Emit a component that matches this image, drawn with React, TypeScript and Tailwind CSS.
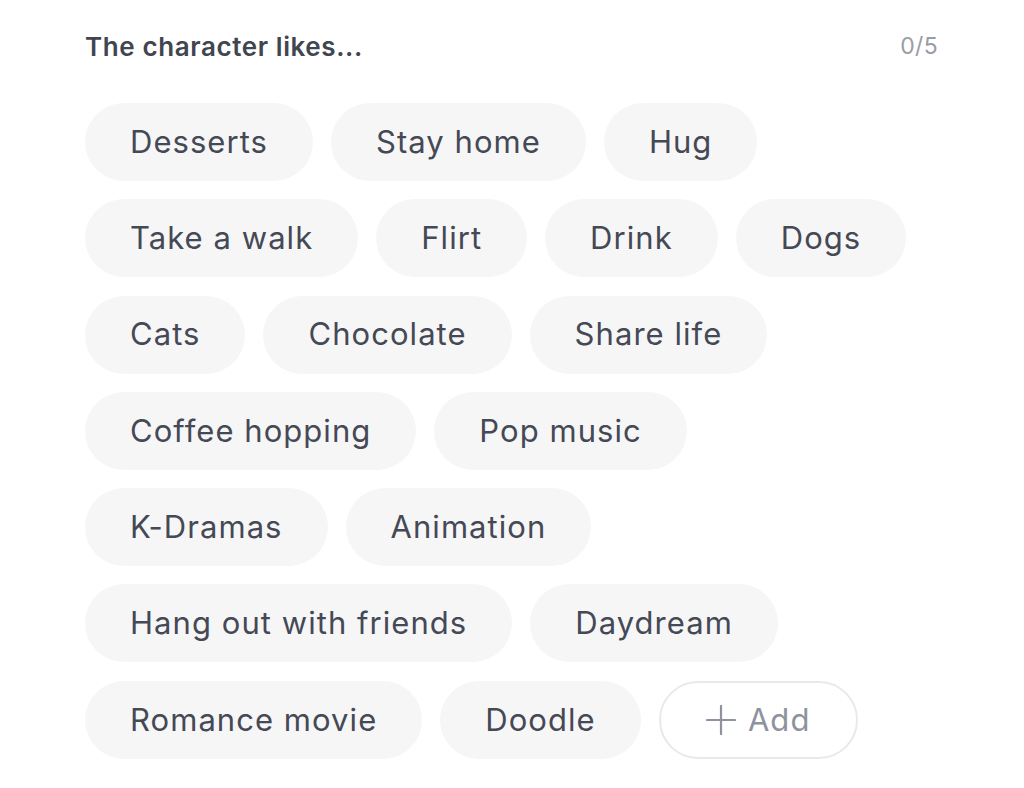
import React from "react";

const rows: string[][] = [
  ["Desserts", "Stay home", "Hug"],
  ["Take a walk", "Flirt", "Drink", "Dogs"],
  ["Cats", "Chocolate", "Share life"],
  ["Coffee hopping", "Pop music"],
  ["K-Dramas", "Animation"],
  ["Hang out with friends", "Daydream"],
  ["Romance movie", "Doodle"],
];

export default function App() {
  return (
    <div
      className="w-[1024px] h-[788px] bg-white pl-[85px] pr-[86px] pt-[30px]"
      style={{ fontFamily: "Inter, 'Noto Sans', sans-serif" }}
    >
      <div className="flex items-center justify-between h-[32px]">
        <span className="text-[26px] font-semibold text-[#41454f] tracking-[0.6px]">
          The character likes...
        </span>
        <span className="text-[23px] text-[#9a9ca8] tracking-[0.3px]">0/5</span>
      </div>
      <div className="mt-[41px] flex flex-col gap-[18.3px]">
        {rows.map((row, i) => (
          <div key={i} className="flex gap-[18px]">
            {row.map((t) => (
              <div
                key={t}
                className="h-[78px] px-[45px] rounded-full bg-[#f6f6f7] flex items-center text-[31px] tracking-[1.05px] text-[#454955] whitespace-nowrap"
              >
                {t}
              </div>
            ))}
            {i === rows.length - 1 && (
              <div className="h-[78px] w-[199px] rounded-full border-2 border-[#e8e9ee] bg-white flex items-center justify-center gap-[12px] text-[31px] tracking-[1.05px] text-[#8e919e]">
                <svg width="30" height="30" viewBox="0 0 30 30">
                  <path d="M15 1v28M1 15h28" stroke="#8e919e" strokeWidth="2.2" strokeLinecap="round" />
                </svg>
                <span>Add</span>
              </div>
            )}
          </div>
        ))}
      </div>
    </div>
  );
}
